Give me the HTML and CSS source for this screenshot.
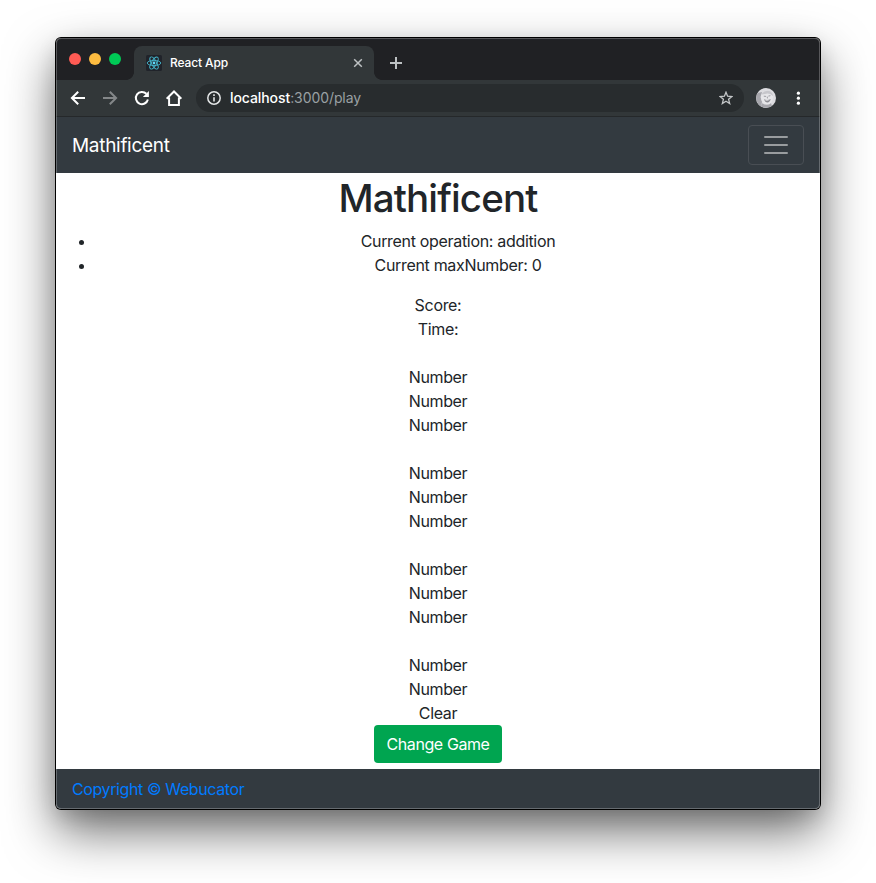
FILE: index.html
```html
<!DOCTYPE html>
<html lang="en">
<head>
<meta charset="utf-8">
<title>React App</title>
<link rel="stylesheet" href="styles.css">
</head>
<body>
<div class="window">
  <div class="tabstrip">
    <div class="lights"><i class="red"></i><i class="yellow"></i><i class="green"></i></div>
    <div class="tab">
      <svg class="favicon" width="16" height="16" viewBox="0 0 16 16"><rect width="16" height="16" rx="1.5" fill="#20232a"/><g fill="none" stroke="#45b5cb" stroke-width=".9"><ellipse cx="8" cy="8" rx="6.8" ry="2.6"/><ellipse cx="8" cy="8" rx="6.8" ry="2.6" transform="rotate(60 8 8)"/><ellipse cx="8" cy="8" rx="6.8" ry="2.6" transform="rotate(120 8 8)"/></g><circle cx="8" cy="8" r="1.4" fill="#61dafb"/></svg>
      <span class="tab-title">React App</span>
      <svg class="close" width="10" height="10" viewBox="0 0 10 10"><path d="M1.2 1.2l7.6 7.6M8.8 1.2l-7.6 7.6" stroke="#bdc1c3" stroke-width="1.5"/></svg>
    </div>
    <svg class="plus" width="12" height="12" viewBox="0 0 12 12"><path d="M6 0v12M0 6h12" stroke="#bdc1c3" stroke-width="2"/></svg>
  </div>
  <div class="toolbar">
    <svg class="nav-icon" width="16" height="16" viewBox="0 0 16 16"><path d="M15 8H2.2M8.2 1.7L1.9 8l6.3 6.3" fill="none" stroke="#fff" stroke-width="2"/></svg>
    <svg class="nav-icon" width="16" height="16" viewBox="0 0 16 16"><path d="M1 8h12.8M7.8 1.7L14.1 8l-6.3 6.3" fill="none" stroke="#848789" stroke-width="2"/></svg>
    <svg class="nav-icon" width="16" height="16" viewBox="0 0 16 16"><path d="M13.9 9.5A6.1 6.1 0 1 1 12.4 3.8" fill="none" stroke="#fff" stroke-width="2"/><path d="M14.9 1v6H8.9z" fill="#fff"/></svg>
    <svg class="nav-icon" width="16" height="16" viewBox="0 0 16 16"><path d="M.6 8.7L8 1.5l7.4 7.2M3.1 7.5v7.4h9.8V7.5" fill="none" stroke="#fff" stroke-width="2"/></svg>
    <div class="omnibox">
      <svg width="14" height="14" viewBox="0 0 14 14"><circle cx="7" cy="7" r="6.2" fill="none" stroke="#e4e6e7" stroke-width="1.5"/><path d="M7 6.2v4.2M7 3.3v1.6" stroke="#e4e6e7" stroke-width="1.6"/></svg>
      <span class="url"><b>localhost</b><span class="path">:3000/play</span></span>
      <svg class="star" width="14" height="14" viewBox="0 0 14 14"><path d="M7 1.2l1.6 4 4.3.3-3.3 2.8 1.1 4.3L7 10.3l-3.7 2.3 1.1-4.3-3.3-2.8 4.3-.3z" fill="none" stroke="#c3c6c8" stroke-width="1.3"/></svg>
    </div>
    <svg class="avatar" width="20" height="20" viewBox="0 0 20 20"><circle cx="10" cy="10" r="10" fill="#dcdce0"/><path d="M1.5 5A10 10 0 0 0 5 18.5L6 14 4.5 9 6 4z" fill="#a6a6ac"/><ellipse cx="11" cy="9.5" rx="6" ry="7" fill="#e6e6e9"/><path d="M5.5 6.5Q8 1.5 13.5 3 17 5 17 8 13 4.5 9 6z" fill="#c6c6cb"/><path d="M7.8 8.2l2.2.2M12.4 8.1l2-.4M11.2 8.6l.3 1.8" fill="none" stroke="#94949b" stroke-width=".9"/><path d="M7.8 11.3q3.6 1.6 7-.3-1 3.4-3.4 3.4-2.4 0-3.6-3.1z" fill="#8c8c93"/><path d="M8.8 12q2.7.8 5-.2-2.3 2-5 .2z" fill="#fff"/><path d="M6 15.2q5 3.2 9 0l1 2.8q-6 3.4-11 .3z" fill="#a6a6ac"/></svg>
    <svg class="menu" width="4" height="14" viewBox="0 0 4 14" fill="#fff"><circle cx="2.4" cy="2.2" r="1.6"/><circle cx="2.4" cy="7.2" r="1.6"/><circle cx="2.4" cy="12.2" r="1.6"/></svg>
  </div>
  <nav class="navbar">
    <span class="brand">Mathificent</span>
    <button class="toggler" aria-label="Toggle navigation"><svg width="30" height="30" viewBox="0 0 30 30"><path d="M4 7h22M4 15h22M4 23h22" stroke="#999c9f" stroke-width="2" stroke-linecap="round"/></svg></button>
  </nav>
  <main>
    <h1>Mathificent</h1>
    <ul><li>Current operation: addition</li><li>Current maxNumber: 0</li></ul>
    <div>Score:</div><div>Time:</div><br>
    <div class="num">Number</div><div class="num">Number</div><div class="num">Number</div><br>
    <div class="num">Number</div><div class="num">Number</div><div class="num">Number</div><br>
    <div class="num">Number</div><div class="num">Number</div><div class="num">Number</div><br>
    <div class="num">Number</div><div class="num">Number</div><div>Clear</div>
    <button class="change">Change Game</button>
  </main>
  <footer><a>Copyright © Webucator</a></footer>
</div>
</body>
</html>
```
FILE: styles.css
```css
* { box-sizing: border-box; }
body {
  margin: 0;
  padding: 38px 56px 0;
  height: 883px;
  overflow: hidden;
  background: #fff;
  color: #212529;
  font: 16px/24px Inter, "Liberation Sans", sans-serif;
  letter-spacing: -0.32px;
}
svg { display: block; flex: none; }
.window {
  position: relative;
  width: 764px;
  height: 771px;
  border-radius: 5px;
  display: flex;
  flex-direction: column;
  background: #fff;
  overflow: hidden;
  box-shadow: 0 0 0 1px #000, 0 22px 50px rgba(0, 0, 0, .58), 0 8px 20px rgba(0, 0, 0, .12);
}
.window::after {
  content: "";
  position: absolute;
  inset: 0;
  border-radius: 5px;
  border: 1px solid rgba(255, 255, 255, .25);
  pointer-events: none;
}
.tabstrip { height: 42px; background: #202124; display: flex; align-items: flex-start; }
.lights { display: flex; gap: 8px; padding: 15px 0 0 13px; width: 78px; }
.lights i { width: 12px; height: 12px; border-radius: 50%; }
.red { background: #ff5b54; }
.yellow { background: #fdbc40; }
.green { background: #00ca56; }
.tab {
  position: relative;
  display: flex;
  align-items: center;
  width: 240px;
  height: 34px;
  margin-top: 8px;
  padding: 0 11px 0 12px;
  border-radius: 8px 8px 0 0;
  background: #323739;
}
.tab::before, .tab::after {
  content: "";
  position: absolute;
  bottom: 0;
  width: 8px;
  height: 8px;
}
.tab::before { left: -8px; background: radial-gradient(circle at 0 0, transparent 7.6px, #323739 8.2px); }
.tab::after { right: -8px; background: radial-gradient(circle at 100% 0, transparent 7.6px, #323739 8.2px); }
.tab-title { flex: 1; margin-left: 8px; color: #fff; font-size: 12px; font-weight: 500; letter-spacing: -0.12px; }
.plus { margin: 19px 0 0 16px; }
.toolbar {
  height: 37px;
  flex: none;
  background: #323739;
  border-bottom: 1px solid #25282a;
  display: flex;
  align-items: center;
  padding-left: 14px;
}
.nav-icon { margin-right: 16px; }
.omnibox {
  display: flex;
  align-items: center;
  width: 548px;
  height: 28px;
  margin-left: -2px;
  padding: 0 11px;
  border-radius: 14px;
  background: #282c2e;
}
.url { flex: 1; margin-left: 9px; font-size: 14px; letter-spacing: -0.08px; color: #9aa0a3; }
.url b { font-weight: 500; color: #fff; }
.avatar { margin-left: 12px; }
.menu { margin-left: 20px; }
.navbar {
  height: 56px;
  flex: none;
  background: #333a40;
  display: flex;
  align-items: center;
  justify-content: space-between;
  padding: 0 16px;
}
.brand { padding-top: 2px; color: #fff; font-size: 19px; letter-spacing: -0.3px; }
.toggler {
  width: 56px;
  height: 40px;
  padding: 0 12px;
  border: 1px solid #494e54;
  border-radius: 4px;
  background: none;
}
main { height: 596px; flex: none; text-align: center; }
h1 { margin: 0 0 8px; font-size: 38.5px; line-height: 50px; height: 48px; font-weight: 500; letter-spacing: -0.85px; }
ul { margin: 0 0 16px; padding-left: 40px; }
.num { letter-spacing: -0.4px; }
.change {
  display: block;
  width: 128px;
  height: 38px;
  margin: 0 auto;
  padding: 0;
  border: 0;
  border-radius: 4px;
  background: #00a550;
  color: #fff;
  font: inherit;
  letter-spacing: -0.4px;
}
footer { height: 40px; flex: none; padding: 8px 16px; background: #333a40; }
footer a { color: #007bff; letter-spacing: -0.39px; }
```
